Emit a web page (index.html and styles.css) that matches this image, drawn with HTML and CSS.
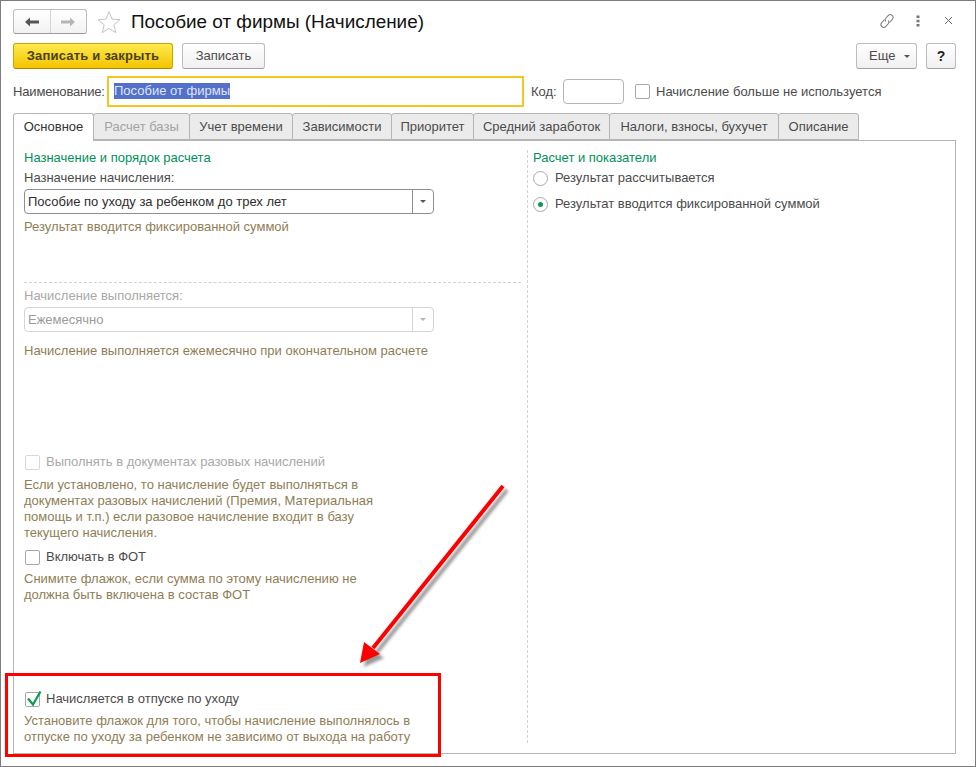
FILE: index.html
```html
<!DOCTYPE html>
<html lang="ru">
<head>
<meta charset="utf-8">
<title>Пособие от фирмы (Начисление)</title>
<link rel="stylesheet" href="styles.css">
</head>
<body>
<div class="window">
  <header class="head">
    <div class="nav">
      <button class="nav-btn"><svg width="16" height="12" viewBox="0 0 16 12"><path d="M1 6l5-4.500V4.500h9v3H6v3z" fill="#555"/></svg></button>
      <button class="nav-btn"><svg width="16" height="12" viewBox="0 0 16 12"><path d="M15 6l-5-4.500V4.500H1v3h9v3z" fill="#b5b5b5"/></svg></button>
    </div>
    <svg class="star" width="24" height="24" viewBox="0 0 24 24"><path d="M12 1.500l3 7.600 8 .6-6.200 5.100 2 7.900-6.800-4.300-6.800 4.300 2-7.900L1 9.700l8-.6z" fill="#fff" stroke="#c4c4c4" stroke-width="1"/></svg>
    <h1 class="title">Пособие от фирмы (Начисление)</h1>
    <div class="head-tools">
      <svg width="16" height="16" viewBox="0 0 16 16" fill="none" stroke="#777" stroke-width="1"><g transform="rotate(-48 8 8)"><path d="M7.500 5.200H3.200a2.800 2.800 0 0 0 0 5.600h3.300a2.800 2.800 0 0 0 2.700-2.300"/><path d="M8.500 10.800h4.300a2.800 2.800 0 0 0 0-5.600H9.500a2.800 2.800 0 0 0-2.700 2.300"/></g></svg>
      <svg class="dots" width="4" height="12" viewBox="0 0 4 12"><g fill="#777"><rect x="0.500" y="0.500" width="3" height="2.500"/><rect x="0.500" y="4.800" width="3" height="2.500"/><rect x="0.500" y="9" width="3" height="2.500"/></g></svg>
      <svg class="close" width="9" height="9" viewBox="0 0 9 9" stroke="#666" stroke-width="1"><path d="M1 1l7 7M8 1L1 8"/></svg>
    </div>
  </header>

  <div class="commands">
    <button class="btn btn-primary">Записать и закрыть</button>
    <button class="btn btn-save">Записать</button>
    <div class="spacer"></div>
    <button class="btn btn-more">Еще <span class="caret"></span></button>
    <button class="btn btn-help">?</button>
  </div>

  <div class="name-row">
    <label class="lbl lbl-name">Наименование:</label>
    <div class="name-input"><span class="selected">Пособие от фирмы</span></div>
    <label class="lbl code-lbl">Код:</label>
    <div class="code-input"></div>
    <span class="check"></span>
    <label class="lbl">Начисление больше не используется</label>
  </div>

  <nav class="tabs">
    <span class="tab tab-active t1">Основное</span>
    <span class="tab tab-disabled t2">Расчет базы</span>
    <span class="tab t3">Учет времени</span>
    <span class="tab t4">Зависимости</span>
    <span class="tab t5">Приоритет</span>
    <span class="tab t6">Средний заработок</span>
    <span class="tab t7">Налоги, взносы, бухучет</span>
    <span class="tab t8">Описание</span>
  </nav>

  <section class="panel">
    <div class="col-left">
      <div class="group-title">Назначение и порядок расчета</div>
      <div class="line field-label">Назначение начисления:</div>
      <div class="select"><span class="select-value">Пособие по уходу за ребенком до трех лет</span><span class="select-btn"><span class="caret"></span></span></div>
      <div class="line hint hint-first">Результат вводится фиксированной суммой</div>
      <div class="h-dash"></div>
      <div class="line field-label muted">Начисление выполняется:</div>
      <div class="select select-disabled"><span class="select-value">Ежемесячно</span><span class="select-btn"><span class="caret"></span></span></div>
      <div class="line hint hint-second">Начисление выполняется ежемесячно при окончательном расчете</div>

      <div class="check-row row-once"><span class="check check-disabled"></span><span class="muted">Выполнять в документах разовых начислений</span></div>
      <p class="hint para para-once">Если установлено, то начисление будет выполняться в<br>документах разовых начислений (Премия, Материальная<br>помощь и т.п.) если разовое начисление входит в базу<br>текущего начисления.</p>

      <div class="check-row row-fot"><span class="check"></span><span class="dark">Включать в ФОТ</span></div>
      <p class="hint para para-fot">Снимите флажок, если сумма по этому начислению не<br>должна быть включена в состав ФОТ</p>

      <div class="check-row row-leave"><span class="check check-on"><svg width="16" height="18" viewBox="0 0 16 18"><path d="M2 8.500L7 14.500 14.500 1.500" fill="none" stroke="#0b9a50" stroke-width="2.200"/></svg></span><span class="dark">Начисляется в отпуске по уходу</span></div>
      <p class="hint para">Установите флажок для того, чтобы начисление выполнялось в<br>отпуске по уходу за ребенком не зависимо от выхода на работу</p>
    </div>
    <div class="col-right">
      <div class="group-title">Расчет и показатели</div>
      <div class="radio-row radio-first"><span class="radio"></span><span class="dark">Результат рассчитывается</span></div>
      <div class="radio-row radio-second"><span class="radio radio-on"></span><span class="dark">Результат вводится фиксированной суммой</span></div>
    </div>
  </section>
</div>

<div class="callout"></div>
<svg class="arrow" width="170" height="200" viewBox="0 0 170 200">
  <defs><filter id="sh" x="-20%" y="-20%" width="140%" height="140%"><feGaussianBlur stdDeviation="1.500"/></filter></defs>
  <g transform="translate(4 4)" opacity="0.55" filter="url(#sh)"><path d="M153 6L23 168" stroke="#444" stroke-width="4" fill="none"/><path d="M10 183l4-21 16 12z" fill="#444"/></g>
  <path d="M153 6L23 168" stroke="#f00" stroke-width="4" fill="none"/>
  <path d="M10 183l4-21 16 12z" fill="#f00"/>
</svg>
</body>
</html>
```
FILE: styles.css
```css
* { box-sizing: border-box; }
html, body { margin: 0; padding: 0; }
body {
  width: 976px;
  height: 767px;
  position: relative;
  overflow: hidden;
  background: #fff;
  font: 13px/16px "Liberation Sans", Arial, sans-serif;
  color: #4b4b4b;
}
.window {
  width: 976px;
  height: 767px;
  border: 1px solid #7d7d7d;
  padding: 8px 19px 12px 12px;
  display: flex;
  flex-direction: column;
}
button { font: inherit; padding: 0; cursor: default; }

.head { display: flex; flex: none; align-items: center; height: 25px; }
.nav {
  display: flex;
  width: 74px;
  height: 25px;
  border: 1px solid #bdbdbd;
  border-bottom-color: #9b9b9b;
  border-radius: 3px;
  background: linear-gradient(#fff, #f2f2f2);
}
.nav-btn { flex: 1; border: 0; background: none; display: flex; align-items: center; justify-content: center; }
.nav-btn + .nav-btn { border-left: 1px solid #d4d4d4; }
.star { margin-left: 10px; }
.title { margin: 0 0 0 10px; font-size: 18.900px; font-weight: 400; line-height: 24px; color: #111; flex: 1; }
.head-tools { display: flex; align-items: center; margin-right: -1px; margin-top: -2px; }
.dots { margin-left: 21px; }
.close { margin-left: 24px; margin-right: 4px; }

.commands { display: flex; flex: none; align-items: stretch; height: 26px; margin-top: 9px; }
.spacer { flex: 1; }
.btn {
  border: 1px solid #bcbcbc;
  border-bottom-color: #a0a0a0;
  border-radius: 3px;
  background: linear-gradient(#fff, #f0f0f0);
  color: #4b4b4b;
}
.btn-primary {
  width: 160px;
  border-color: #c9a500;
  border-bottom-color: #a98b00;
  background: linear-gradient(#fdea4f, #f4c400);
  font-weight: 700;
  letter-spacing: 0.2px;
  color: #4a4213;
}
.btn-save { width: 83px; margin-left: 9px; }
.btn-more { width: 61px; padding-left: 6px; }
.btn-more .caret { margin-left: 5px; }
.btn-help { width: 30px; margin-left: 9px; font-weight: 700; color: #222; font-size: 14px; }
.caret {
  display: inline-block;
  width: 0;
  height: 0;
  border: 3px solid transparent;
  border-top-color: #555;
  border-bottom-width: 0;
  vertical-align: middle;
  margin-left: 3px;
}

.name-row { display: flex; flex: none; align-items: center; height: 31px; margin-top: 7px; }
.lbl { color: #4b4b4b; white-space: nowrap; }
.lbl-name { width: 94px; flex: none; letter-spacing: -0.15px; }
.name-input {
  width: 417px;
  height: 31px;
  padding: 5px 5px;
  border: 2px solid #f5c61e;
  flex: none;
}
.selected { display: inline-block; background: #5470c8; color: #dfe6ff; line-height: 16px; }
.code-lbl { width: 32px; flex: none; margin-left: 7px; }
.code-input {
  width: 61px;
  height: 25px;
  margin-right: 11px;
  border: 1px solid #b5b5b5;
  border-radius: 4px;
  flex: none;
}
.check {
  flex: none;
  display: inline-block;
  position: relative;
  width: 15px;
  height: 15px;
  margin-right: 6px;
  border: 1px solid #a8a8a8;
  border-radius: 2px;
  background: #fff;
}
.check-disabled { border-color: #d8d8d8; }
.check-on svg { position: absolute; left: 0; top: -3px; }

.tabs { display: flex; flex: none; height: 28px; margin-top: 6px; position: relative; z-index: 1; }
.tab {
  height: 27px;
  padding: 0;
  margin-right: -1px;
  text-align: center;
  line-height: 25px;
  border: 1px solid #b5b5b5;
  border-radius: 3px 3px 0 0;
  background: #ebebeb;
  white-space: nowrap;
}
.t1 { width: 81px; }
.t2 { width: 97px; }
.t3 { width: 104px; }
.t4 { width: 100px; }
.t5 { width: 83px; }
.t6 { width: 137px; }
.t7 { width: 170px; }
.t8 { width: 81px; }
.tab-active { height: 28px; background: #fff; border-bottom: 0; color: #333; }
.tab-disabled { color: #a3a3a3; }

.panel {
  flex: 1;
  min-height: 0;
  display: flex;
  margin-top: -1px;
  padding: 9px 0 10px 10px;
  border: 1px solid #b5b5b5;
}
.col-left { width: 503px; flex: none; }
.col-right { flex: 1; border-left: 1px dashed #d2d2d2; padding-left: 5px; }
.group-title { color: #00915a; line-height: 16px; }
.line { line-height: 16px; white-space: nowrap; }
.field-label { margin-top: 4px; color: #4b4b4b; }
.muted { color: #a9a9a9; }
.dark { color: #4b4b4b; }
.hint { color: #8f7e55; }
.select {
  display: flex;
  width: 410px;
  height: 25px;
  margin: 3px 0 0;
  border: 1px solid #8f8f8f;
  border-radius: 4px;
  color: #2e2e2e;
}
.select-value { flex: 1; padding-left: 3px; line-height: 23px; }
.select-btn { width: 21px; border-left: 1px solid #8f8f8f; display: flex; align-items: center; justify-content: center; }
.select-btn .caret { margin: 0; }
.select-disabled { margin-top: 3px; border-color: #d4d4d4; color: #9b9b9b; }
.select-disabled .select-btn { border-left-color: #d4d4d4; }
.select-disabled .caret { border-top-color: #b5b5b5; }
.hint-first { margin-top: 5px; }
.h-dash { width: 497px; margin-top: 47px; border-top: 1px dashed #d2d2d2; }
.h-dash + .field-label { margin-top: 5px; }
.hint-second { margin-top: 11px; }
.check-row { display: flex; align-items: center; height: 16px; padding-left: 1px; }
.row-once { margin-top: 95px; }
.row-fot { margin-top: 8px; }
.row-leave { margin-top: 88px; }
.para { margin: 6px 0 0; line-height: 16px; white-space: nowrap; }
.para-once { margin-top: 7px; }
.para-fot { margin-top: 6px; }
.radio-row { display: flex; align-items: center; height: 16px; }
.radio-first { margin-top: 4px; }
.radio-second { margin-top: 10px; }
.radio {
  flex: none;
  position: relative;
  width: 15px;
  height: 15px;
  margin-right: 7px;
  border: 1px solid #a8a8a8;
  border-radius: 50%;
  background: #fff;
}
.radio-on::after {
  content: "";
  position: absolute;
  left: 4px;
  top: 4px;
  width: 5px;
  height: 5px;
  border-radius: 50%;
  background: #0b9a50;
}

.callout {
  position: absolute;
  left: 5px;
  top: 673px;
  width: 436px;
  height: 84px;
  border: 3px solid #f00;
}
.arrow { position: absolute; left: 350px; top: 480px; }
```
